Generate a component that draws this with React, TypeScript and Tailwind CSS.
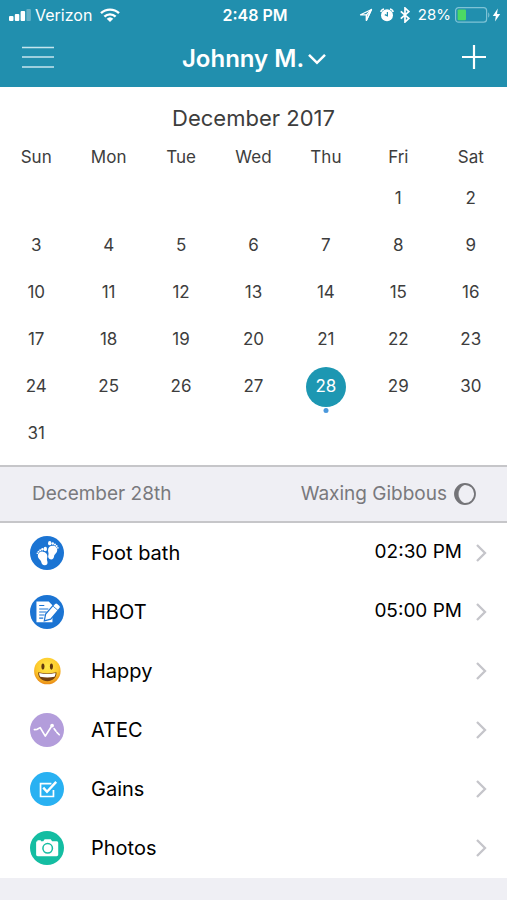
import { useState, type ReactNode } from "react";

export default function App() {
  const [selected, setSelected] = useState(28);

  return (
    <div className="min-h-screen bg-[#efeff4] font-['Inter',sans-serif] text-black">
      <header className="bg-[#218fae] text-white">
        <StatusBar />
        <NavBar />
      </header>

      <main>
        <Calendar selected={selected} onSelect={setSelected} />

        {/* day summary strip */}
        <section className="flex h-[58px] items-center justify-between border-y-2 border-[#c6c6c9] pr-[30px] pl-8 text-[19px] text-[#79797d]">
          <h2>December 28th</h2>
          <p className="flex items-center gap-[6px]">
            Waxing Gibbous
            <MoonIcon />
          </p>
        </section>

        <ul className="bg-white pb-px">
          {ENTRIES.map((entry) => (
            <li key={entry.label}>
              <a href="#" className="flex h-[59px] items-center pr-5 pl-[30px] text-[20px]">
                <span className="size-[34px] shrink-0">{entry.icon}</span>
                <span className="ml-[27px] flex-1">{entry.label}</span>
                {entry.time && <time className="text-[19px]">{entry.time}</time>}
                <svg viewBox="0 0 12 20" className="ml-[13px] h-5 w-3 shrink-0" fill="none" stroke="#c5c5ca" strokeWidth="2.3">
                  <path d="M2 2l8 8-8 8" />
                </svg>
              </a>
            </li>
          ))}
        </ul>
      </main>
    </div>
  );
}

function StatusBar() {
  return (
    <div className="grid h-[30px] grid-cols-[1fr_auto_1fr] items-center pr-[6px] pl-[9px] text-[16px]">
      <div className="flex items-center">
        <svg viewBox="0 0 22 12" className="h-3 w-[22px]" fill="currentColor">
          <rect x="0" y="7" width="4.500" height="5" rx="1" />
          <rect x="5.800" y="5" width="4.500" height="7" rx="1" />
          <rect x="11.600" y="2" width="4.500" height="10" rx="1" />
          <rect x="17.400" y="0" width="4.500" height="12" rx="1" opacity=".3" />
        </svg>
        <span className="ml-1">Verizon</span>
        <svg viewBox="0 0 20 14" className="ml-2 h-[14px] w-5" fill="none" stroke="currentColor" strokeWidth="2.4">
          <path d="M1 5.2a13 13 0 0 1 18 0" />
          <path d="M4.4 8.7a8 8 0 0 1 11.2 0" />
          <path d="M10 14l-3.3-3.3a4.8 4.8 0 0 1 6.6 0z" fill="currentColor" stroke="none" />
        </svg>
      </div>

      <span className="font-semibold">2:48 PM</span>

      <div className="flex items-center justify-end">
        <svg viewBox="0 0 14 14" className="size-[14px]" fill="none" stroke="currentColor" strokeWidth="1.2" strokeLinejoin="round">
          <path d="M1.5 6.8L12.5 1.5 7.4 12.5V6.8z" />
          <path d="M7.4 6.8L12.5 1.5 7.4 12.5z" fill="currentColor" fillOpacity=".5" />
        </svg>
        <svg viewBox="0 0 14 14" className="ml-[7px] size-[14px]">
          <circle cx="7" cy="7.3" r="6" fill="#fff" />
          <path d="M.8 4A4 4 0 0 1 4 .9M13.2 4A4 4 0 0 0 10 .9" stroke="#fff" strokeWidth="1.5" fill="none" />
          <path d="M7.4 4v3.8L4.8 6.600" stroke="#218fae" strokeWidth="1.2" fill="none" />
        </svg>
        <svg viewBox="0 0 10 16" className="ml-[6px] h-4 w-[10px]" fill="none" stroke="currentColor" strokeWidth="1.7">
          <path d="M.8 4.4l8 7L5 15V1l3.8 3.6-8 7" />
        </svg>
        <span className="ml-2 text-[15px]">28%</span>
        <svg viewBox="0 0 36 16" className="ml-1 h-4 w-9">
          <rect x=".6" y=".6" width="31" height="14.6" rx="3" fill="none" stroke="#7fc3d6" strokeWidth="1.2" />
          <rect x="2.6" y="2.6" width="8.4" height="10.6" rx="1" fill="#4cd964" />
          <path d="M33.2 5.4c1.6.6 1.6 4.4 0 5z" fill="#7fc3d6" />
        </svg>
        <svg viewBox="0 0 9 14" className="ml-px h-[14px] w-[9px]" fill="currentColor">
          <path d="M5.8.5L.8 8h3L3 13.5 8.2 6H5z" />
        </svg>
      </div>
    </div>
  );
}

function NavBar() {
  return (
    <nav className="grid h-[57px] grid-cols-[1fr_auto_1fr] items-center pr-[21px] pl-[22px]">
      <button aria-label="Menu" className="justify-self-start">
        <svg viewBox="0 0 32 24" className="mb-[3px] h-6 w-8" stroke="#c5e5ee" strokeWidth="1.5">
          <path d="M0 2.5h32M0 12h32M0 22h32" />
        </svg>
      </button>
      <button className="flex items-center gap-1 text-[24px] font-semibold">
        Johnny M.
        <svg viewBox="0 0 18 12" className="h-3 w-[18px]" fill="none" stroke="currentColor" strokeWidth="2.5">
          <path d="M1 1.8l8 8 8-8" />
        </svg>
      </button>
      <button aria-label="Add" className="justify-self-end">
        <svg viewBox="0 0 24 24" className="mb-[3px] size-6" stroke="currentColor" strokeWidth="2.2">
          <path d="M12 0v24M0 12h24" />
        </svg>
      </button>
    </nav>
  );
}

function Calendar({ selected, onSelect }: { selected: number; onSelect: (day: number) => void }) {
  return (
    <section className="bg-white pt-[15px] pb-2 text-[#3d3d3d]">
      <h1 className="text-center text-[22px] leading-8">December 2017</h1>
      <table className="w-full table-fixed text-center">
        <thead>
          <tr className="h-[41px] text-[17px]">
            {WEEKDAYS.map((name) => (
              <th key={name} className="p-0 pt-[6px] font-normal">{name}</th>
            ))}
          </tr>
        </thead>
        <tbody>
          {WEEKS.map((week, i) => (
            <tr key={i} className="h-[47px] text-[17px]">
              {week.map((day, j) => (
                <td key={j} className="p-0">
                  {day && (
                    <button
                      onClick={() => onSelect(day)}
                      className={day === selected ? "relative size-10 rounded-full bg-[#1d97b2] text-white" : "size-10"}
                    >
                      {day}
                      {day === selected && (
                        <span className="absolute -bottom-[6px] left-1/2 size-[5px] -translate-x-1/2 rounded-full bg-[#4a98dc]" />
                      )}
                    </button>
                  )}
                </td>
              ))}
            </tr>
          ))}
        </tbody>
      </table>
    </section>
  );
}

function MoonIcon() {
  return (
    <svg viewBox="0 0 24 24" className="size-6" fill="none" stroke="#747478" strokeWidth="1.8">
      <circle cx="12" cy="12" r="10" />
      <path d="M12 2a10 10 0 0 0 0 20C3 17 3 7 12 2z" fill="#747478" strokeWidth=".5" />
    </svg>
  );
}

function Badge({ color, children }: { color: string; children: ReactNode }) {
  return (
    <svg viewBox="0 0 100 100" className="size-full">
      <circle cx="50" cy="50" r="50" fill={color} />
      {children}
    </svg>
  );
}

function FeetIcon() {
  return (
    <Badge color="#1b74d3">
      <g fill="#fff">
        {/* left foot */}
        <path d="M23 58c0-8 7-13 15-12 9 1 14 8 13 16-1 5-2 7 0 12 2 7-1 12-8 12-6 0-9-4-10-10-1-6-10-9-10-18z" />
        <ellipse cx="45" cy="38" rx="5" ry="6.500" />
        <circle cx="36.500" cy="39" r="3.500" />
        <circle cx="30" cy="42" r="3" />
        <circle cx="25" cy="46" r="2.700" />
        <circle cx="21.500" cy="51" r="2.400" />
        {/* right foot */}
        <path d="M80 43c1-8-5-14-13-14-9 0-14 6-14 14 0 6 3 8 1 13-2 7 1 13 8 13 6 0 8-4 9-10s8-7 9-16z" />
        <ellipse cx="58" cy="21" rx="5" ry="6.500" />
        <circle cx="67" cy="22" r="3.500" />
        <circle cx="73.500" cy="25" r="3" />
        <circle cx="78.500" cy="29.500" r="2.700" />
        <circle cx="82" cy="35" r="2.400" />
      </g>
    </Badge>
  );
}

function NoteIcon() {
  return (
    <Badge color="#1b74d3">
      <path d="M19 19h36l11 11v50H19z" fill="#fff" />
      <path d="M27 31h15M27 41h27M27 50h22M27 59h16M27 68h12" stroke="#1b74d3" strokeWidth="3" />
      <path d="M42 76l4-20 26-30c3-3 7-3 10 0l5 4c3 3 3 7 0 10L61 71z" fill="#fff" stroke="#1b74d3" strokeWidth="3.500" />
      <path d="M68 33l14 12" stroke="#1b74d3" strokeWidth="2.500" />
    </Badge>
  );
}

function SmileIcon() {
  return (
    <svg viewBox="0 0 100 100" className="size-full">
      <defs>
        <radialGradient id="face" cx="50%" cy="35%" r="65%">
          <stop offset="0" stopColor="#ffe84a" />
          <stop offset=".65" stopColor="#fdc92b" />
          <stop offset="1" stopColor="#e98a16" />
        </radialGradient>
      </defs>
      <circle cx="51" cy="50" r="39" fill="url(#face)" />
      <ellipse cx="38" cy="37" rx="4.500" ry="9" fill="#62380f" />
      <ellipse cx="63" cy="37" rx="4.500" ry="9" fill="#62380f" />
      <path d="M24 54c17 4 37 4 54 0 1 17-12 26-27 26S23 71 24 54z" fill="#74400f" />
      <path d="M27 56c16 4 32 4 48 0 0 5-1 8-3 11-14 3-28 3-42 0-2-3-3-6-3-11z" fill="#fff" />
    </svg>
  );
}

function TrendIcon() {
  return (
    <Badge color="#b39ddb">
      <g fill="none" stroke="#fff" strokeWidth="5" strokeLinecap="round" strokeLinejoin="round">
        <path d="M13 49l8-1 9-5 15 25 17-27" />
        <path d="M71 46l5 7M79 57l7 7" />
      </g>
      <circle cx="65" cy="37" r="5.500" fill="#fff" />
    </Badge>
  );
}

function CheckIcon() {
  return (
    <Badge color="#29b1f2">
      <g fill="none" stroke="#fff" strokeWidth="5">
        <path d="M63 34H31v38h38V53" />
        <path d="M39 46l11 12 27-29" strokeWidth="7" />
      </g>
    </Badge>
  );
}

function CameraIcon() {
  return (
    <Badge color="#14bda2">
      <path d="M22 30v-3h10v3h7l4-6h18l4 6h13c3 0 5 2 5 5v34c0 3-2 5-5 5H23c-3 0-5-2-5-5V35c0-3 1-5 4-5z" fill="#fff" />
      <circle cx="52" cy="51" r="14" fill="none" stroke="#14bda2" strokeWidth="4.500" />
    </Badge>
  );
}

const WEEKDAYS = ["Sun", "Mon", "Tue", "Wed", "Thu", "Fri", "Sat"];

// December 2017 starts on a Friday
const WEEKS = Array.from({ length: 6 }, (_, week) =>
  Array.from({ length: 7 }, (_, i) => {
    const day = week * 7 + i - 4;
    return day >= 1 && day <= 31 ? day : null;
  }),
);

const ENTRIES = [
  { label: "Foot bath", time: "02:30 PM", icon: <FeetIcon /> },
  { label: "HBOT", time: "05:00 PM", icon: <NoteIcon /> },
  { label: "Happy", icon: <SmileIcon /> },
  { label: "ATEC", icon: <TrendIcon /> },
  { label: "Gains", icon: <CheckIcon /> },
  { label: "Photos", icon: <CameraIcon /> },
];
